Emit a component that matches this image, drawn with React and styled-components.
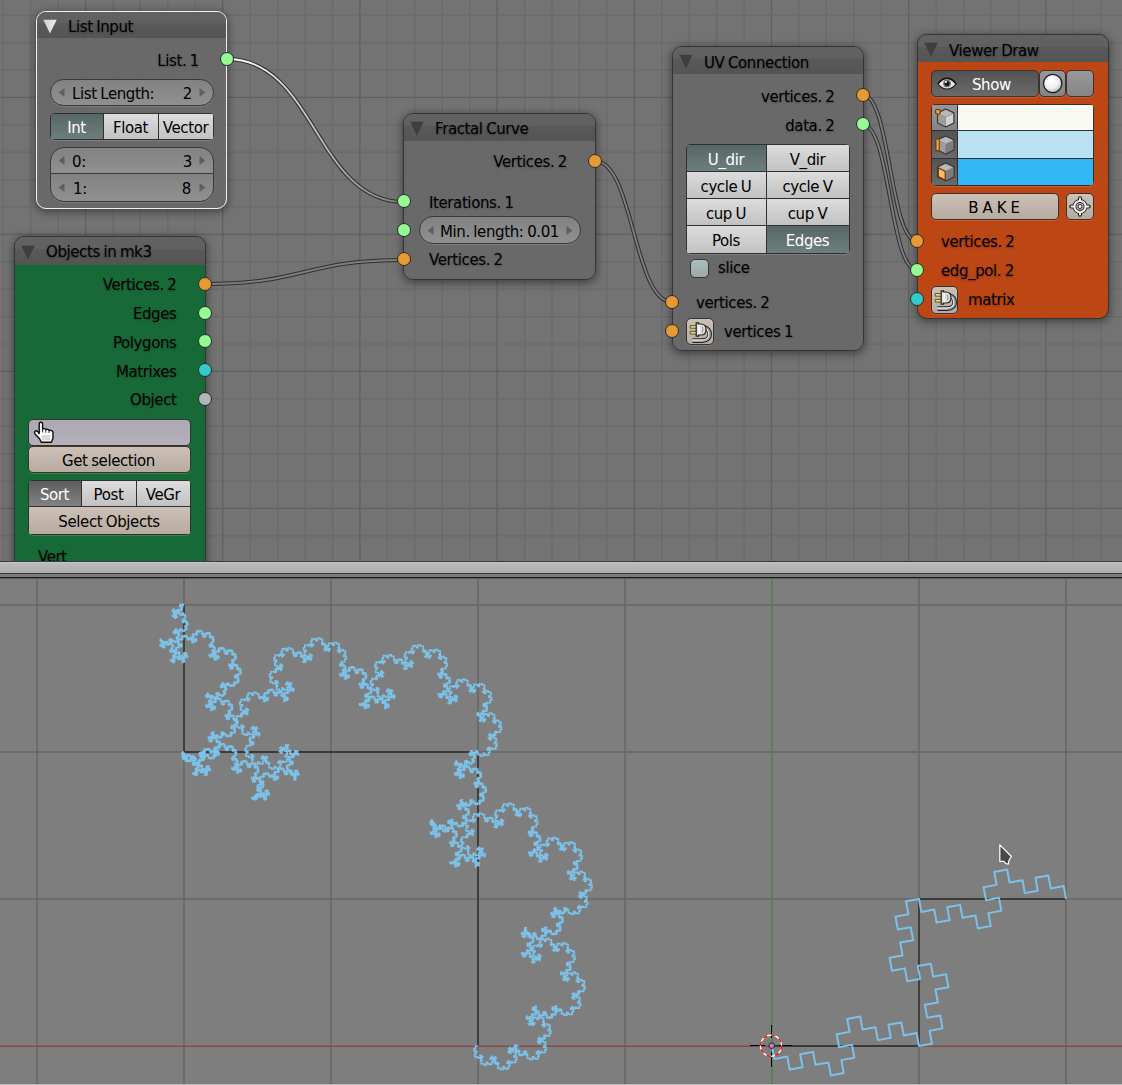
import React from "react";
import styled, { createGlobalStyle, css } from "styled-components";

const GlobalStyle = createGlobalStyle`
  *, *::before, *::after { box-sizing: border-box; }
  html, body { margin: 0; padding: 0; background: #7e7e7e; }
  body { overflow: hidden; }
`;

const Screen = styled.div`
  width: 1122px;
  height: 1085px;
  display: flex;
  flex-direction: column;
  overflow: hidden;
  font-family: "DejaVu Sans", sans-serif;
  font-size: 15px;
  letter-spacing: -0.4px;
  word-spacing: -0.8px;
  color: #000;
  user-select: none;
`;

/* ---------- panes ---------- */

const NodeEditor = styled.section`
  position: relative;
  height: 561px;
  overflow: hidden;
  background: #737373;
`;

const Splitter = styled.div`
  height: 18px;
  flex: none;
  background: linear-gradient(
    #3c3c3c 0 1px, #c4c4c4 1px 2px, #bababa 2px, #adadad 12px,
    #383838 12px 13px, #797979 13px 16px, #1e1e1e 16px 17px, #5a5a5a 17px 18px
  );
`;

const Viewport = styled.section`
  height: 506px;
  background: #7e7e7e;
  border-bottom: 1px solid #b8b8b8;
`;

const Layer = styled.svg`
  display: block;
`;

/* ---------- node shell ---------- */

const NodeBox = styled.article`
  position: absolute;
  left: ${(p) => p.$x}px;
  top: ${(p) => p.$y}px;
  width: ${(p) => p.$w}px;
  height: ${(p) => p.$h}px;
  border: 1px solid ${(p) => (p.$selected ? "#f2f2f2" : "#353535")};
  border-radius: 10px;
  background: ${(p) => p.$fill};
  background-clip: padding-box;
  box-shadow: 0 2px 9px 1px rgba(0, 0, 0, 0.42);
`;

const Header = styled.header`
  height: ${(p) => p.$h}px;
  display: flex;
  align-items: center;
  gap: 10px;
  padding: 2px 0 0 6px;
  border-radius: 9px 9px 0 0;
  background: linear-gradient(#626262 0, #606060 42%, #595959 46%, #545454 100%);
  text-shadow: 0 1px 2px rgba(0, 0, 0, 0.3);
`;

const Title = styled.h2`
  margin: 0;
  padding-top: ${(p) => p.$drop ?? 2}px;
  font: inherit;
  line-height: 20px;
  white-space: nowrap;
`;

const Body = styled.div`
  display: flex;
  flex-direction: column;
  padding: 0 ${(p) => p.$pr ?? 13}px 0 ${(p) => p.$pl ?? 13}px;
`;

const Row = styled.div`
  position: relative;
  flex: none;
  display: flex;
  align-items: center;
  justify-content: ${(p) => (p.$out ? "flex-end" : "flex-start")};
  height: ${(p) => p.$h ?? 28}px;
  margin-top: ${(p) => p.$mt ?? 0}px;
  padding: ${(p) => (p.$out ? `2px ${p.$pad ?? 15}px 0 0` : `${p.$top ?? 2}px 0 0 ${p.$pad ?? 10}px`)};
  gap: ${(p) => p.$gap ?? 0}px;
  white-space: nowrap;
  text-shadow: 0 1px 2px rgba(0, 0, 0, 0.28);
`;

const Socket = styled.i`
  position: absolute;
  width: 14px;
  height: 14px;
  top: calc(50% - ${(p) => p.$up ?? 8}px);
  ${(p) => (p.$side === "left" ? `left: ${p.$off ?? -21}px;` : `right: ${p.$off ?? -20}px;`)}
  border: 1px solid #2b2b2b;
  border-radius: 50%;
  background: ${(p) => p.$color};
`;

/* ---------- controls ---------- */

const controlText = css`
  display: flex;
  align-items: center;
  justify-content: center;
  white-space: nowrap;
`;

const tones = {
  light: "linear-gradient(#dcdcdc, #c2c2c2)",
  teal: "linear-gradient(#566766, #6c7e7d)",
  dark: "linear-gradient(#5d5d5d, #828282)",
  darkFlat: "linear-gradient(#535353, #6a6a6a)",
  tan: "linear-gradient(#cdc1b7, #b7aba1)",
  lilac: "linear-gradient(#aca8b4, #b5b1bb)",
  grey: "linear-gradient(#989898, #858585)",
};

const Slider = styled.div`
  height: ${(p) => p.$h ?? 27}px;
  margin-top: ${(p) => p.$mt ?? 0}px;
  flex: ${(p) => (p.$grow ? 1 : "none")};
  display: flex;
  align-items: center;
  padding: 1px 7px 0;
  border: 1px solid #3b3b3b;
  border-radius: ${(p) => p.$radius ?? "14px"};
  background: linear-gradient(#828282, #909090);
  box-shadow: ${(p) => (p.$open ? "none" : "0 1px 0 rgba(255,255,255,.12)")};
  text-shadow: none;
  & > span:last-of-type { margin-left: auto; }
`;

const SliderText = styled.span`
  padding: ${(p) => p.$top ?? 2}px ${(p) => p.$r ?? 8}px 0 ${(p) => p.$l ?? 8}px;
`;

const ButtonGrid = styled.div`
  display: grid;
  flex: none;
  grid-template-columns: ${(p) => p.$cols};
  grid-template-rows: ${(p) => p.$rows};
  gap: 1px;
  padding: 1px;
  margin-top: ${(p) => p.$mt}px;
  background: #303030;
  border-radius: 5px;
  box-shadow: 0 1px 0 rgba(255, 255, 255, 0.14);
  overflow: hidden;
`;

const Cell = styled.div`
  ${controlText}
  padding: ${(p) => p.$top ?? 2}px 1px 0 0;
  background: ${(p) => tones[p.$tone] || p.$tone};
  color: ${(p) => (p.$on ? "#fff" : "#000")};
  grid-column: ${(p) => (p.$wide ? "1 / -1" : "auto")};
`;

const IconCell = styled(Cell)`
  padding: 0;
`;

const Button = styled.div`
  ${controlText}
  justify-content: ${(p) => (p.$start ? "flex-start" : "center")};
  flex: none;
  width: ${(p) => (p.$w ? `${p.$w}px` : "auto")};
  height: ${(p) => p.$h ?? 27}px;
  margin-top: ${(p) => p.$mt ?? 0}px;
  padding: ${(p) => p.$padding ?? "2px 2px 0 0"};
  border: 1px solid #3a332e;
  border-radius: 5px;
  background: ${(p) => tones[p.$tone]};
  color: ${(p) => (p.$on ? "#fff" : "#000")};
  box-shadow: 0 1px 0 rgba(255, 255, 255, 0.14);
  text-shadow: none;
  word-spacing: ${(p) => p.$words ?? -0.8}px;
`;

const Strip = styled.div`
  display: flex;
  flex: none;
  margin-top: ${(p) => p.$mt}px;
  gap: ${(p) => p.$gap}px;
`;

const Checkbox = styled.span`
  width: 19px;
  height: 19px;
  border: 1px solid #353535;
  border-radius: 5px;
  background: linear-gradient(#adbdbc, #9aabaa);
`;

const PointerOverlay = styled.svg`
  position: absolute;
  left: 33px;
  top: 420px;
`;

/* ---------- icons ---------- */

const Collapse = ({ open }) => (
  <svg width="15" height="15" viewBox="0 0 15 15">
    <defs>
      <linearGradient id="tri" x1="0" y1="0" x2="1" y2="0">
        <stop offset="0" stopColor="#d0d0d0" />
        <stop offset="1" stopColor="#ededed" />
      </linearGradient>
    </defs>
    <path d="M.3 .8H13.7L7 14.4Z" fill={open ? "url(#tri)" : "#3e3e3e"} />
  </svg>
);

const Arrow = ({ right }) => (
  <svg width="7" height="10" viewBox="0 0 7 10">
    <path d={right ? "M.5 0L6.3 4.5L.5 9Z" : "M6.5 0L.7 4.5L6.5 9Z"} fill="#5e5e5e" />
  </svg>
);

const PlugIcon = () => (
  <svg width="24" height="24" viewBox="0 0 24 24" fill="none">
    <path d="M4.5 20.6H14C19.4 20.6 22 17.8 21.6 13.6C21.3 10.4 19.3 8.2 16.6 7.4" stroke="#242424" strokeWidth="4.6" />
    <path d="M4.2 20.6H14C19.4 20.6 22 17.8 21.6 13.6C21.3 10.4 19.3 8.2 16.6 7.4" stroke="#9c9c9c" strokeWidth="2.6" />
    <path d="M4.2 20.1H13.6C18.6 20.1 21.2 17.5 20.8 13.8C20.4 11 19 9.2 17 8.2" stroke="#e6e6e6" strokeWidth="1.1" />
    <path d="M2.2 5.6H8.5V8.2H2.2ZM2.2 11.4H8.5V14H2.2Z" fill="#f0e08a" stroke="#5c5425" strokeWidth="1" />
    <path d="M8.2 2.9H10.5V4H13C16.4 4 18 6.6 18 9.4C18 12.4 16.4 15 13 15H10.5V16.1H8.2Z" fill="#dedede" stroke="#222" strokeWidth="1.2" />
    <path d="M11.2 5.2V14" stroke="#fff" strokeWidth="1.3" />
    <path d="M14.2 6.8Q16 9.4 14.2 12.4" stroke="#888" strokeWidth="1" />
  </svg>
);

const EyeIcon = () => (
  <svg width="20" height="14" viewBox="0 0 20 14">
    <path d="M1 7C4 2.8 7 1.6 10 1.6S16 2.8 19 7C16 10.9 13 12 10 12S4 10.9 1 7Z" fill="#e6e6e6" stroke="#151515" strokeWidth="1.2" />
    <path d="M1 6.6C4 2.2 7 1.2 10 1.2S16 2.2 19 6.6" fill="none" stroke="#111" strokeWidth="1.5" />
    <circle cx="10" cy="6.4" r="3.9" fill="#777" />
    <circle cx="10" cy="6.4" r="2.5" fill="#101010" />
    <circle cx="9" cy="5" r="1.1" fill="#fff" />
  </svg>
);

const BallIcon = () => (
  <svg width="22" height="22" viewBox="0 0 22 22">
    <defs>
      <radialGradient id="ball" cx=".4" cy=".33" r=".72">
        <stop offset="0" stopColor="#fff" />
        <stop offset=".6" stopColor="#f0f0f0" />
        <stop offset="1" stopColor="#a9a9a9" />
      </radialGradient>
    </defs>
    <circle cx="10.7" cy="10.5" r="9.2" fill="url(#ball)" stroke="#1d1d1d" strokeWidth="1.3" />
  </svg>
);

const TargetIcon = () => (
  <svg width="22" height="22" viewBox="0 0 22 22" fill="none">
    <path d="M11 4.5V2.3M11 16.5V18.7M5 10.5H2.3M17 10.5H19.7" stroke="#222" strokeWidth="4" strokeLinecap="round" />
    <circle cx="11" cy="10.5" r="5.6" stroke="#222" strokeWidth="4" />
    <circle cx="11" cy="10.5" r="5.6" stroke="#f4f4f4" strokeWidth="2" />
    <path d="M11 5V2.5M11 16V18.5M5.4 10.5H2.6M16.6 10.5H19.4" stroke="#f4f4f4" strokeWidth="2" strokeLinecap="round" />
    <circle cx="11" cy="10.5" r="2" fill="#f4f4f4" stroke="#222" strokeWidth="1" />
  </svg>
);

const CubeIcon = ({ part }) => (
  <svg width="24" height="24" viewBox="0 0 24 24" strokeLinejoin="round">
    <path d="M12.7 3L21 6.9V16.8L12.8 21L4.6 17V6.9Z" fill="#8b8b8b" stroke="#3a3a3a" strokeWidth="1.3" />
    <path d="M12.7 3.9L20 7.3L12.7 10.8L5.6 7.3Z" fill="#b9b9b9" />
    <path d="M5.3 8L12.2 11.2V20L5.3 16.6Z" fill={part === "face" ? "#ffb868" : "#9e9e9e"} stroke={part === "face" ? "#6f3a06" : "none"} strokeWidth="1.2" />
    <path d="M13 11.2L20.2 7.9V16.4L13 20.1Z" fill={part === "vertex" ? "#d2d2d2" : "#7d7d7d"} />
    {part === "vertex" && <circle cx="4.9" cy="5.8" r="2.5" fill="#f29a3a" stroke="#6f3a06" strokeWidth="1.1" />}
    {part === "edge" && <path d="M3 6H6.2V17.6H3Z" fill="#f6a94f" stroke="#6f3a06" strokeWidth="1.1" />}
  </svg>
);

/* ---------- drawings ---------- */

const range = (start, end, step) => {
  const out = [];
  for (let v = start; v < end; v += step) out.push(v);
  return out;
};

const EditorGrid = () => (
  <g>
    {range(3.2, 1122, 27.44).map((x, i) => (
      <path key={`x${i}`} d={`M${x} 0V561`} stroke={i % 5 === 3 ? "#606060" : "#6a6a6a"} strokeWidth="1.2" />
    ))}
    {range(15.2, 561, 27.4).map((y, i) => (
      <path key={`y${i}`} d={`M0 ${y}H1122`} stroke={i % 5 === 3 ? "#606060" : "#6a6a6a"} strokeWidth="1.2" />
    ))}
  </g>
);

const Wire = ({ from, to, tone = "#7d7d7d" }) => {
  const [x1, y1] = from;
  const [x2, y2] = to;
  const h = (x2 - x1) * 0.5;
  const d = `M${x1} ${y1}C${x1 + h} ${y1} ${x2 - h} ${y2} ${x2} ${y2}`;
  return (
    <g fill="none">
      <path d={d} stroke="#303030" strokeWidth="4" />
      <path d={d} stroke={tone} strokeWidth="1.9" />
    </g>
  );
};

const distance = (a, b) => Math.hypot(b[0] - a[0], b[1] - a[1]);

/* Replaces every segment by a scaled and turned copy of the motif. */
function fractal(motif, iterations, minLength) {
  const o = motif[0];
  const e = motif[motif.length - 1];
  const vx = e[0] - o[0];
  const vy = e[1] - o[1];
  const n = vx * vx + vy * vy;
  const local = motif.map(([x, y]) => {
    const dx = x - o[0];
    const dy = y - o[1];
    return [(dx * vx + dy * vy) / n, (dy * vx - dx * vy) / n];
  });
  let points = motif;
  for (let k = 0; k < iterations; k += 1) {
    const next = [points[0]];
    for (let i = 1; i < points.length; i += 1) {
      const a = points[i - 1];
      const b = points[i];
      if (distance(a, b) > minLength) {
        const sx = b[0] - a[0];
        const sy = b[1] - a[1];
        for (let j = 1; j < local.length - 1; j += 1) {
          const [u, v] = local[j];
          next.push([a[0] + u * sx - v * sy, a[1] + u * sy + v * sx]);
        }
      }
      next.push(b);
    }
    points = next;
  }
  return points;
}

const toPath = (points) => `M${points.map(([x, y]) => `${x.toFixed(2)} ${y.toFixed(2)}`).join("L")}`;

const leftMotif = [[184, 605], [184, 752], [478, 752], [478, 1046]];
const rightMotif = [[772, 1046], [919, 1046], [919, 899], [1066, 899]];
const leftCurve = toPath(fractal(leftMotif, 8, 1.47));
const rightCurve = toPath(fractal(rightMotif, 3, 1.47));

const Scene = () => (
  <Layer width="1122" height="505" viewBox="0 579 1122 505" fill="none">
    <g stroke="#676767" strokeWidth="1.6">
      {[37, 184, 331, 478, 625, 919, 1066].map((x) => <path key={x} d={`M${x} 579V1084`} />)}
      {[605, 752, 899].map((y) => <path key={y} d={`M0 ${y}H1122`} />)}
    </g>
    <path d="M0 1046.2H1122" stroke="#8c4a4a" strokeWidth="1.5" />
    <path d="M772 579V1084" stroke="#468646" strokeWidth="1.6" />
    <g stroke="#3a3a3a" strokeWidth="1.8">
      <path d={toPath(leftMotif)} />
      <path d={toPath(rightMotif)} />
    </g>
    <path d={leftCurve} stroke="#7cc1e8" strokeWidth="1.6" />
    <path d={rightCurve} stroke="#7cc1e8" strokeWidth="2" strokeLinejoin="round" />
    <path d="M750 1045.5H765M779 1045.5H792M771.5 1025V1038M771.5 1052V1067" stroke="#000" />
    <circle cx="771" cy="1045.7" r="10.6" stroke="#fff" strokeWidth="1.2" />
    <circle cx="771" cy="1045.7" r="10.6" stroke="#f00" strokeWidth="1.3" strokeDasharray="4.16 4.16" />
    <circle cx="771.7" cy="1045.7" r="2.8" fill="#d27cc8" stroke="#2b1a2a" />
    <path d="M999.8 844.8V861.4H1004L1005.5 863.5L1008.3 864.2L1009 860.3L1011.4 856.5Z" fill="#484848" stroke="#fff" strokeWidth="1.2" strokeLinejoin="round" />
  </Layer>
);

const HandPointer = () => (
  <PointerOverlay width="22" height="24" viewBox="0 0 22 24">
    <path
      d="M6.2 13.5V4.2C6.2 1.6 9.6 1.6 9.6 4.2V9.2C10.5 8.2 12.3 8.4 12.8 9.6C13.9 8.9 15.5 9.3 16 10.5C17.4 9.9 20 10.7 20 12.6V18.3L18.4 22.2H8.2L6.6 18.7L2.2 14.2C.4 11.8 3.1 9.9 4.6 11.4Z"
      fill="#fff" stroke="#0c0c0c" strokeWidth="1.4" strokeLinejoin="round"
    />
    <path d="M9.6 9V12.5M12.8 9.8V12.8M16 10.8V13" stroke="#333" strokeWidth="1" />
    <path d="M10 15V20.5M12 15V20.5M14 15V20.5M16 15V20.5" stroke="#b0b0b0" strokeWidth="1" />
  </PointerOverlay>
);

/* ---------- nodes ---------- */

const ORANGE = "#e59a34";
const GREEN = "#93fb92";
const CYAN = "#33cacb";
const GREY = "#adb9b9";
const BODY = "rgba(104,104,104,.88)";

const Node = ({ title, x, y, w, h, head, fill = BODY, selected, drop, pl, pr, children }) => (
  <NodeBox $x={x} $y={y} $w={w} $h={h} $fill={fill} $selected={selected}>
    <Header $h={head}>
      <Collapse open={selected} />
      <Title $drop={drop}>{title}</Title>
    </Header>
    <Body $pl={pl} $pr={pr}>{children}</Body>
  </NodeBox>
);

const ValueSlider = ({ label, value, l, r, ...rest }) => (
  <Slider {...rest}>
    <Arrow />
    <SliderText $l={l} $r={0}>{label}</SliderText>
    <SliderText $l={0} $r={r}>{value}</SliderText>
    <Arrow right />
  </Slider>
);

const ListInput = () => (
  <Node title="List Input" x={36} y={11} w={191} h={198} head={26} selected pr={12}>
    <Row $out $mt={8}>List. 1<Socket $color={GREEN} $off={-20} /></Row>
    <ValueSlider label="List Length:" value="2" $mt={5} l={7} r={7} />
    <ButtonGrid $cols="52px 54px 54px" $rows="25px" $mt={7}>
      <Cell $tone="teal" $on>Int</Cell>
      <Cell $tone="light">Float</Cell>
      <Cell $tone="light">Vector</Cell>
    </ButtonGrid>
    <ValueSlider label="0:" value="3" $mt={7} $radius="14px 14px 0 0" $open l={7} r={7} />
    <ValueSlider label="1:" value="8" $mt={-1} $h={29} $radius="0 0 14px 14px" l={8} r={8} />
  </Node>
);

const ObjectsIn = () => (
  <Node title="Objects in mk3" x={14} y={236} w={192} h={345} head={28} fill="#176a38" drop={0} pr={14}>
    {[["Vertices. 2", ORANGE], ["Edges", GREEN], ["Polygons", GREEN], ["Matrixes", CYAN], ["Object", GREY]].map(
      ([label, color], i) => (
        <Row $out key={label} $h={28.75} $mt={i ? 0 : 5} $pad={14.5}>
          {label}
          <Socket $color={color} $off={-21} $up={7.4} />
        </Row>
      )
    )}
    <Button $tone="lilac" $mt={5.25} />
    <Button $tone="tan">Get selection</Button>
    <ButtonGrid $cols="52px 54px 53px" $rows="25px 27px" $mt={7}>
      <Cell $tone="dark" $on>Sort</Cell>
      <Cell $tone="light">Post</Cell>
      <Cell $tone="light">VeGr</Cell>
      <Cell $tone="tan" $wide>Select Objects</Cell>
    </ButtonGrid>
    <Row $mt={7}>Vert</Row>
  </Node>
);

const FractalCurve = () => (
  <Node title="Fractal Curve" x={403} y={113} w={193} h={167} head={27} drop={0} pl={15} pr={14}>
    <Row $out $mt={6} $pad={14}>Vertices. 2<Socket $color={ORANGE} $up={7} $off={-21} /></Row>
    <Row $mt={13}>Iterations. 1<Socket $side="left" $color={GREEN} $off={-22} /></Row>
    <Row $pad={0} $top={0}>
      <Socket $side="left" $color={GREEN} $off={-22} $up={7} />
      <ValueSlider label="Min. length:" value="0.01" $grow l={6} r={7} $h={28} />
    </Row>
    <Row $mt={1}>Vertices. 2<Socket $side="left" $color={ORANGE} $off={-22} $up={7} /></Row>
  </Node>
);

const UV_MODES = ["U_dir", "V_dir", "cycle U", "cycle V", "cup U", "cup V", "Pols", "Edges"];

const UVConnection = () => (
  <Node title="UV Connection" x={672} y={46} w={192} h={305} head={27} pr={13}>
    <Row $out $mt={8} $pad={15.5}>vertices. 2<Socket $color={ORANGE} $off={-20} /></Row>
    <Row $out $mt={1} $pad={15.5}>data. 2<Socket $color={GREEN} $off={-20} /></Row>
    <ButtonGrid $cols="79px 82px" $rows="26px 26px 26px 27px" $mt={5}>
      {UV_MODES.map((mode) => {
        const on = mode === "U_dir" || mode === "Edges";
        return <Cell key={mode} $tone={on ? "teal" : "light"} $on={on} $top={3}>{mode}</Cell>;
      })}
    </ButtonGrid>
    <Row $pad={4} $gap={9} $top={0}><Checkbox />slice</Row>
    <Row $mt={6}>vertices. 2<Socket $side="left" $color={ORANGE} $off={-21} $up={7} /></Row>
    <Row $mt={1} $pad={0} $gap={10} $top={1}>
      <Button as="span" $w={28} $tone="tan" $padding="0"><PlugIcon /></Button>
      vertices 1
      <Socket $side="left" $color={ORANGE} $off={-21} $up={7} />
    </Row>
  </Node>
);

const ViewerDraw = () => (
  <Node title="Viewer Draw" x={917} y={34} w={192} h={285} head={27} fill="#bd4615" pr={14}>
    <Strip $mt={8} $gap={0}>
      <Button $tone="darkFlat" $w={108} $on $start $padding="0 0 0 5px">
        <EyeIcon />
        <SliderText $l={15} $r={0}>Show</SliderText>
      </Button>
      <Button $tone="grey" $w={27} $padding="0"><BallIcon /></Button>
      <Button $tone="grey" $w={28} />
    </Strip>
    <ButtonGrid $cols="25px 135px" $rows="25px 27px 26px" $mt={7}>
      <IconCell $tone="grey"><CubeIcon part="vertex" /></IconCell>
      <Cell $tone="#f8f9f2" />
      <IconCell $tone="darkFlat"><CubeIcon part="edge" /></IconCell>
      <Cell $tone="#bbe0f2" />
      <IconCell $tone="darkFlat"><CubeIcon part="face" /></IconCell>
      <Cell $tone="#31b8f4" />
    </ButtonGrid>
    <Strip $mt={7} $gap={7}>
      <Button $tone="tan" $w={128} $words={0}>B A K E</Button>
      <Button $tone="tan" $w={28} $padding="0"><TargetIcon /></Button>
    </Strip>
    <Row $mt={7}>vertices. 2<Socket $side="left" $color={ORANGE} $off={-21} $up={7} /></Row>
    <Row $mt={1}>edg_pol. 2<Socket $side="left" $color={GREEN} $off={-21} $up={7} /></Row>
    <Row $mt={1} $pad={0} $gap={10} $top={1}>
      <Button as="span" $w={27} $h={28} $tone="tan" $padding="0"><PlugIcon /></Button>
      matrix
      <Socket $side="left" $color={CYAN} $off={-21} $up={7} />
    </Row>
  </Node>
);

export default function App() {
  return (
    <Screen>
      <GlobalStyle />
      <NodeEditor>
        <Layer width="1122" height="561">
          <defs>
            <linearGradient id="hot" gradientUnits="userSpaceOnUse" x1="227" y1="0" x2="404" y2="0">
              <stop offset="0" stopColor="#fff" />
              <stop offset=".45" stopColor="#c4c4c4" />
              <stop offset="1" stopColor="#7d7d7d" />
            </linearGradient>
          </defs>
          <EditorGrid />
          <Wire from={[227, 59]} to={[404, 202]} tone="url(#hot)" />
          <Wire from={[205, 284]} to={[404, 260]} />
          <Wire from={[595, 161]} to={[672, 302]} />
          <Wire from={[863, 95]} to={[917, 241]} />
          <Wire from={[863, 125]} to={[917, 270]} />
        </Layer>
        <ListInput />
        <ObjectsIn />
        <FractalCurve />
        <UVConnection />
        <ViewerDraw />
        <HandPointer />
      </NodeEditor>
      <Splitter />
      <Viewport>
        <Scene />
      </Viewport>
    </Screen>
  );
}
